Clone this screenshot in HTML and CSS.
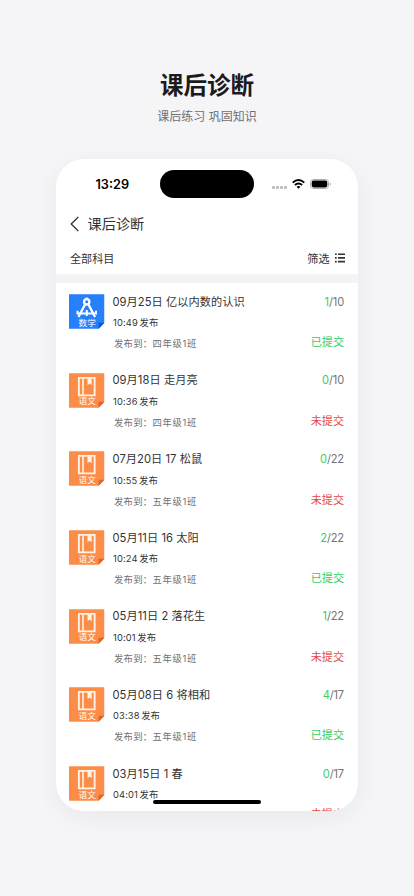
FILE: index.html
```html
<!DOCTYPE html>
<html lang="zh-CN">
<head>
<meta charset="utf-8">
<title>课后诊断</title>
<link rel="stylesheet" href="styles.css">
</head>
<body>
<svg class="defs" width="0" height="0">
  <symbol id="math" viewBox="0 0 36 35">
    <path d="M0 0H36V29L30 35H0Z" fill="#2680fc"/>
    <path d="M36 29L30 35V29Z" fill="#1558bd"/>
    <g fill="none" stroke="#fff" stroke-width="2.3">
      <circle cx="18" cy="7.7" r="2.7"/>
      <path d="M16.3 10.3L9.6 23M19.7 10.3L26.4 23"/>
      <path d="M8.6 16.8V19.5H27.4V16.8M18 16V22" stroke-width="2"/>
    </g>
    <path d="M17 3.2h2v2h-2z" fill="#fff"/>
  </symbol>
  <symbol id="book" viewBox="0 0 36 35">
    <path d="M0 0H36V29L30 35H0Z" fill="#fc8d49"/>
    <path d="M36 29L30 35V29Z" fill="#e2642c"/>
    <g fill="none" stroke="#fff3e8" stroke-width="1.9">
      <path d="M10 4.7H26V22.4H10Z"/>
      <path d="M14.2 4.6V22" stroke-width="1.6"/>
    </g>
    <path d="M18.8 5H23V12.2L20.9 10.3L18.8 12.2Z" fill="#fff3e8"/>
  </symbol>
</svg>
<header class="hero">
  <h1>课后诊断</h1>
  <p>课后练习 巩固知识</p>
</header>
<main class="phone">
  <div class="status">
    <span class="clock">13:29</span>
    <span class="island"></span>
    <div class="signals">
      <span class="dots"><i></i><i></i><i></i><i></i></span>
      <svg class="wifi" width="13" height="10" viewBox="0 0 13 10"><g fill="none" stroke="#000" stroke-width="1.9"><path d="M.7 3.6Q6.5-1.6 12.3 3.6"/><path d="M2.9 6Q6.5 2.8 10.1 6"/></g><path d="M4.6 7.8Q6.5 6.2 8.4 7.8L6.5 9.8Z"/></svg>
      <svg class="battery" width="21" height="10" viewBox="0 0 21 10"><rect x=".5" y=".5" width="18" height="9" rx="3" fill="#fff" stroke="#aaa"/><rect x="1.7" y="1.6" width="15.6" height="6.8" rx="1.8"/><path d="M19.6 3.4Q21 4 21 5T19.6 6.6Z" fill="#aaa"/></svg>
    </div>
  </div>
  <div class="nav">
    <svg width="9" height="16" viewBox="0 0 9 16"><path d="M8.3 1L1.2 8L8.3 15" fill="none" stroke="#333" stroke-width="1.3"/></svg>
    <span>课后诊断</span>
  </div>
  <div class="filter">
    <span>全部科目</span>
    <span class="choose">筛选 <svg width="10" height="10" viewBox="0 0 10 10"><path d="M0 1.2H1.7M3 1.2H10M0 4.9H1.7M3 4.9H10M0 8.6H1.7M3 8.6H10" stroke="#333" stroke-width="1.6"/></svg></span>
  </div>
  <div class="list">
    <div class="row">
      <div class="icon"><svg><use href="#math"/></svg><b>数学</b></div>
      <div class="info"><h2>09月25日 亿以内数的认识</h2><p class="time">10:49<span>发布</span></p><p class="to">发布到：<span>四年级1班</span></p></div>
      <div class="side"><p class="count"><em>1</em>/10</p><p class="done">已提交</p></div>
    </div>
    <div class="row">
      <div class="icon"><svg><use href="#book"/></svg><b>语文</b></div>
      <div class="info"><h2>09月18日 走月亮</h2><p class="time">10:36<span>发布</span></p><p class="to">发布到：<span>四年级1班</span></p></div>
      <div class="side"><p class="count"><em>0</em>/10</p><p class="todo">未提交</p></div>
    </div>
    <div class="row">
      <div class="icon"><svg><use href="#book"/></svg><b>语文</b></div>
      <div class="info"><h2>07月20日 17 松鼠</h2><p class="time">10:55<span>发布</span></p><p class="to">发布到：<span>五年级1班</span></p></div>
      <div class="side"><p class="count"><em>0</em>/22</p><p class="todo">未提交</p></div>
    </div>
    <div class="row">
      <div class="icon"><svg><use href="#book"/></svg><b>语文</b></div>
      <div class="info"><h2>05月11日 16 太阳</h2><p class="time">10:24<span>发布</span></p><p class="to">发布到：<span>五年级1班</span></p></div>
      <div class="side"><p class="count"><em>2</em>/22</p><p class="done">已提交</p></div>
    </div>
    <div class="row">
      <div class="icon"><svg><use href="#book"/></svg><b>语文</b></div>
      <div class="info"><h2>05月11日 2 落花生</h2><p class="time">10:01<span>发布</span></p><p class="to">发布到：<span>五年级1班</span></p></div>
      <div class="side"><p class="count"><em>1</em>/22</p><p class="todo">未提交</p></div>
    </div>
    <div class="row">
      <div class="icon"><svg><use href="#book"/></svg><b>语文</b></div>
      <div class="info"><h2>05月08日 6 将相和</h2><p class="time">03:38<span>发布</span></p><p class="to">发布到：<span>五年级1班</span></p></div>
      <div class="side"><p class="count"><em>4</em>/17</p><p class="done">已提交</p></div>
    </div>
    <div class="row">
      <div class="icon"><svg><use href="#book"/></svg><b>语文</b></div>
      <div class="info"><h2>03月15日 1 春</h2><p class="time">04:01<span>发布</span></p></div>
      <div class="side"><p class="count"><em>0</em>/17</p><p class="todo">未提交</p></div>
    </div>
  </div>
  <div class="home"></div>
</main>
</body>
</html>
```

FILE: styles.css
```css
* { box-sizing: border-box; }
body {
  margin: 0;
  height: 896px;
  overflow: hidden;
  background: #f5f5f8;
  color: #333;
  font-family: Inter, "Noto Sans CJK SC", sans-serif;
}
h1, h2, p { margin: 0; white-space: nowrap; }
svg { display: block; }
.defs { position: absolute; }
.hero { height: 159px; padding-top: 67px; text-align: center; }
.hero h1 { font-size: 23.5px; line-height: 38px; font-weight: 700; color: #1b1b1d; }
.hero p { padding-top: 1px; font-size: 12px; line-height: 22px; color: #707073; }
.phone {
  position: relative;
  width: 302px;
  height: 652px;
  margin-left: 56px;
  overflow: hidden;
  border-radius: 28px;
  background: #fff;
  box-shadow: 0 6px 24px rgba(40, 40, 60, .055);
}
.status {
  display: grid;
  grid-template-columns: 104px 94px 1fr;
  align-items: center;
  height: 50px;
}
.clock { padding-left: 39.5px; font-size: 12.7px; font-weight: 600; color: #000; }
.island { height: 28px; border-radius: 14px; background: #000; }
.signals { display: flex; align-items: center; padding-left: 18px; }
.dots { display: flex; gap: 1.4px; margin-right: 5px; padding-top: 7px; }
.dots i { width: 2.7px; height: 2.7px; border-radius: 50%; background: #bbb; }
.wifi { margin-right: 5px; }
.nav {
  display: flex;
  align-items: center;
  gap: 9px;
  height: 30px;
  padding-left: 13.5px;
  font-size: 14.2px;
}
.nav span { margin-top: -2px; }
.filter {
  display: flex;
  justify-content: space-between;
  align-items: center;
  height: 35px;
  padding: 3px 13px 0 14px;
  font-size: 11.1px;
}
.choose { display: flex; align-items: center; gap: 5.5px; }
.list { border-top: 9px solid #f4f4f6; }
.row {
  display: grid;
  grid-template-columns: 43.5px 1fr auto;
  height: 78.67px;
  padding: 8.7px 14px 0 13px;
}
.icon { position: relative; width: 35.5px; height: 35px; margin-top: 2.3px; }
.icon svg { width: 100%; height: 100%; }
.icon b {
  position: absolute;
  left: 9.5px;
  top: 23.7px;
  font-size: 8.7px;
  line-height: 11px;
  font-weight: 400;
  color: #fff;
  transform: scaleY(.93);
}
.info h2 { font-size: 11.2px; line-height: 20px; font-weight: 400; letter-spacing: .06px; }
.time { padding: .5px 0 0 .5px; font-size: 9.3px; line-height: 21px; letter-spacing: .15px; }
.time span { margin-left: 1.6px; }
.to { padding-left: 1.5px; font-size: 9.3px; line-height: 21px; letter-spacing: .3px; color: #707070; }
.to span { letter-spacing: .75px; }
.side { text-align: right; font-size: 11.1px; }
.count { line-height: 20px; letter-spacing: -.15px; color: #737373; }
.count em { font-style: normal; color: #34cf66; }
.done, .todo { margin-top: 20.5px; line-height: 20px; }
.done { color: #2fce64; }
.todo { color: #e54848; }
.home {
  position: absolute;
  left: 97px;
  bottom: 7px;
  width: 108px;
  height: 4px;
  border-radius: 2px;
  background: #000;
}
```
